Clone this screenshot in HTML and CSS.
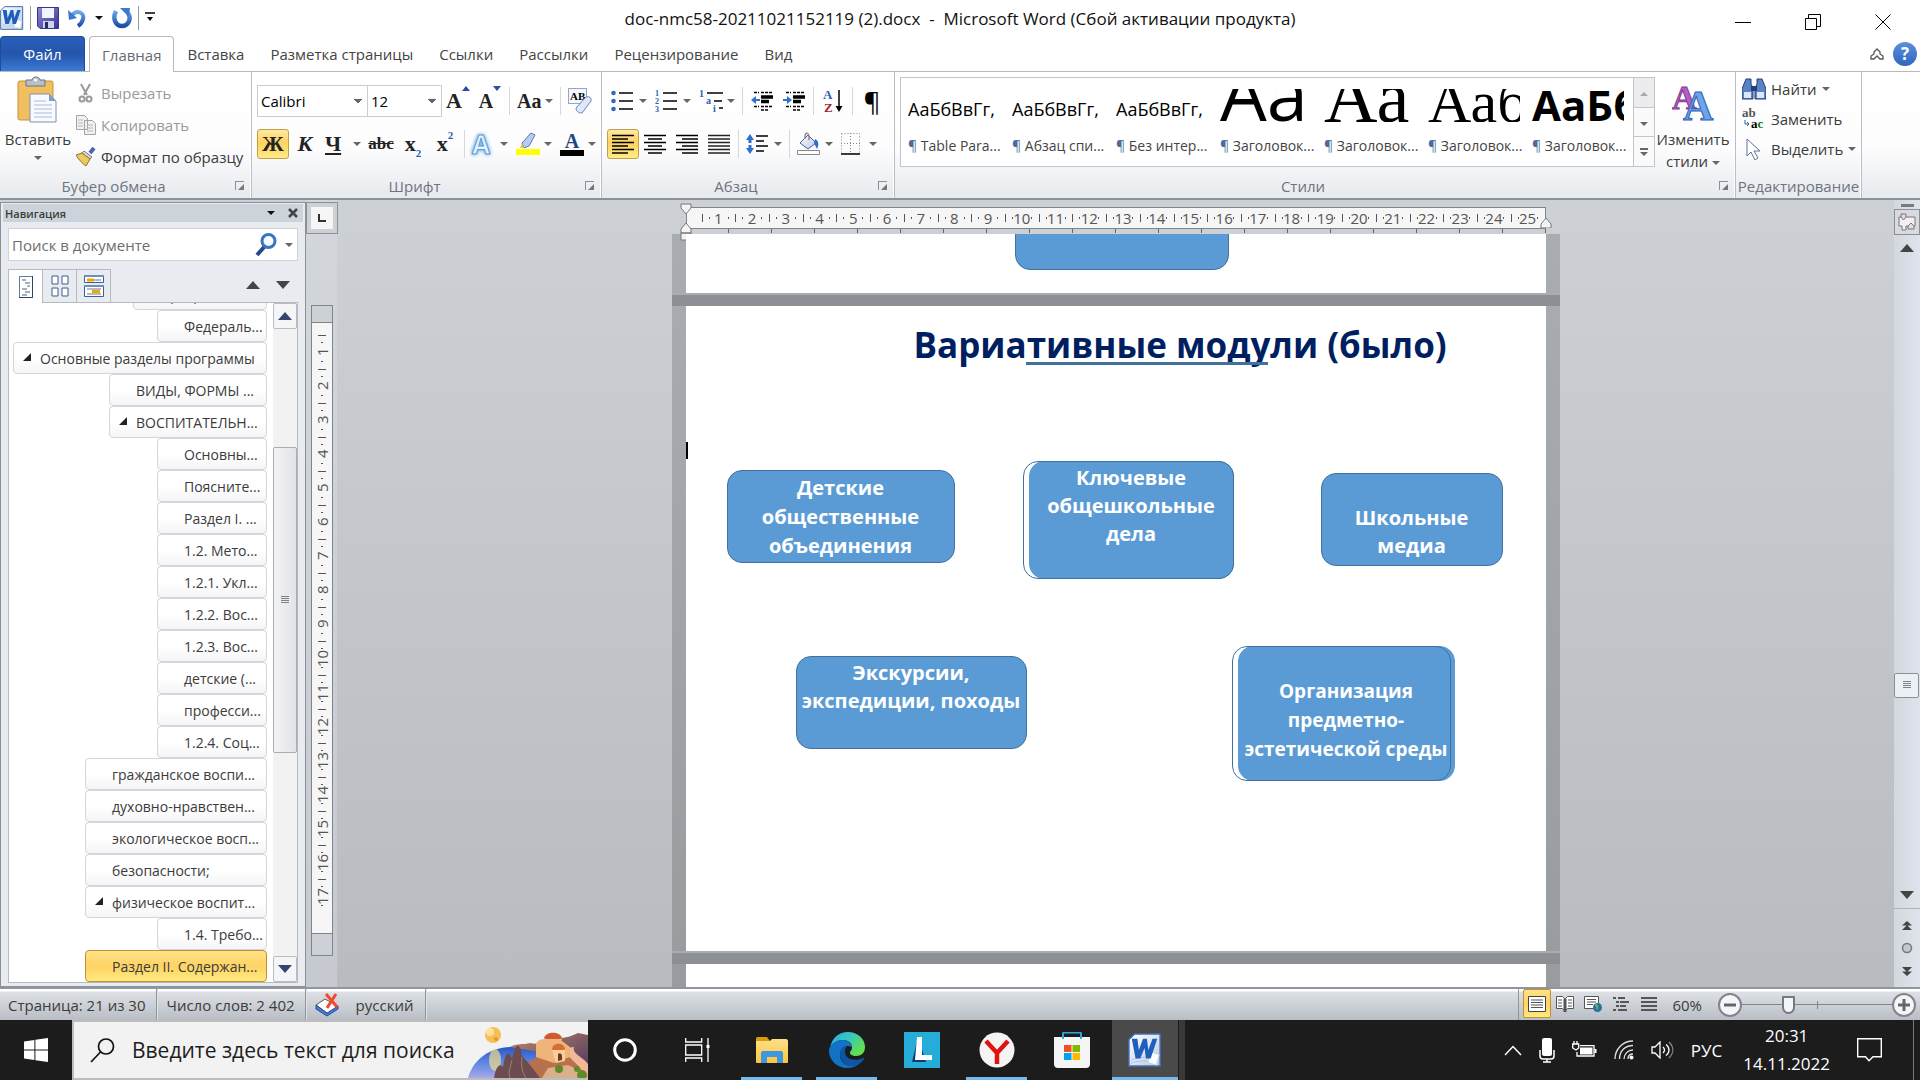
FILE: index.html
```html
<!DOCTYPE html>
<html lang="ru">
<head>
  <meta charset="UTF-8" />
  <meta name="viewport" content="width=device-width, initial-scale=1.0"/>
  <title>doc-nmc58-20211021152119 (2).docx - Microsoft Word</title>
  <link rel="stylesheet" href="styles.css">
</head>
<body>
  <svg class="defs" aria-hidden="true">
    <defs>
      <linearGradient id="blueV" x1="0" y1="0" x2="0" y2="1"><stop offset="0" stop-color="#6fa8ee"/><stop offset="1" stop-color="#1c4fa8"/></linearGradient>
      <linearGradient id="violet" x1="0" y1="0" x2="1" y2="1"><stop offset="0" stop-color="#8f8be0"/><stop offset="1" stop-color="#37328f"/></linearGradient>
      <linearGradient id="silver" x1="0" y1="0" x2="1" y2="1"><stop offset="0" stop-color="#ffffff"/><stop offset="1" stop-color="#b9c9e4"/></linearGradient>
      <linearGradient id="gold" x1="0" y1="0" x2="0" y2="1"><stop offset="0" stop-color="#ffe08a"/><stop offset="1" stop-color="#f7c540"/></linearGradient>
      <symbol id="word" viewBox="0 0 36 36">
        <path d="M7 1h27v34H1V7z" fill="url(#silver)" stroke="#3f6db5" stroke-width="1.5"/>
        <path d="M3 29c8-4 18-4 24-2M3 32c8-3 17-3 22-1" stroke="#a9bfe2" fill="none"/>
        <path d="M24 20l9 3-3 11-9-3z" fill="#fff" stroke="#c9d6ec"/>
        <path d="M4 6h6l1.500 12L16 6h4l1.500 12L26 6h5l-7 21h-5l-1.500-11L13 27H8z" fill="#1e5fbe"/>
      </symbol>
      <symbol id="lines" viewBox="0 0 22 20"><path d="M0 1.500h22M0 5h22M0 8.500h22M0 12h22M0 15.500h22M0 19h22" stroke="currentColor" stroke-width="1.500"/></symbol>
    </defs>
  </svg>

  <header class="titlebar">
    <div class="quick">
      <svg class="icon24"><use href="#word"/></svg>
      <span class="quick-sep"></span>
      <button class="plain" aria-label="Сохранить"><svg width="22" height="22" viewBox="0 0 22 22"><path d="M.5.5h21v21H3l-2.500-2.500z" fill="url(#violet)" stroke="#37328f"/><path d="M5 1h12v10H5z" fill="#f3f4fb"/><path d="M6 14h11v7H6z" fill="#cfd3ea"/><path d="M8 15h3v6H8z" fill="#2b2a60"/></svg></button>
      <button class="plain" aria-label="Отменить"><svg width="18" height="20" viewBox="0 0 18 20"><path d="M4 7C9 1 17 5 15 11c-.6 3-2 5-5 7" fill="none" stroke="url(#blueV)" stroke-width="4"/><path d="M0 2l1 10 8-2z" fill="#3d78cf"/></svg></button>
      <i class="caret dark"></i>
      <button class="plain" aria-label="Повторить"><svg width="20" height="22" viewBox="0 0 20 22"><path d="M4 4c-4 8 0 15 6 15s10-7 6-13" fill="none" stroke="url(#blueV)" stroke-width="4.500"/><path d="M8 1h10l-1 9z" fill="#3d78cf"/></svg></button>
      <span class="quick-sep"></span>
      <button class="plain" aria-label="Настройка панели"><svg width="10" height="12" viewBox="0 0 10 12"><path d="M0 1h10" stroke="#000" stroke-width="1.500"/><path d="M2 5h6l-3 4z"/></svg></button>
    </div>
    <h1 class="window-title">doc-nmc58-20211021152119 (2).docx&nbsp; -&nbsp; Microsoft Word (Сбой активации продукта)</h1>
    <div class="window-buttons">
      <button class="plain" aria-label="Свернуть"><svg width="16" height="16" viewBox="0 0 16 16"><path d="M0 8.500h16" stroke="#000"/></svg></button>
      <button class="plain" aria-label="Развернуть"><svg width="16" height="16" viewBox="0 0 16 16"><path d="M.5 4.500h11v11H.5zM3.500 4V.5h12v12H12" fill="none" stroke="#000"/></svg></button>
      <button class="plain" aria-label="Закрыть"><svg width="16" height="16" viewBox="0 0 16 16"><path d="M.5.5l15 15M15.500.5l-15 15" stroke="#000"/></svg></button>
    </div>
  </header>

  <nav class="tabs">
    <button class="tab file">Файл</button>
    <button class="tab active">Главная</button>
    <button class="tab">Вставка</button>
    <button class="tab">Разметка страницы</button>
    <button class="tab">Ссылки</button>
    <button class="tab">Рассылки</button>
    <button class="tab">Рецензирование</button>
    <button class="tab">Вид</button>
    <div class="tabs-end">
      <button class="plain" aria-label="Свернуть ленту"><svg width="14" height="12" viewBox="0 0 14 12"><path d="M7 1L4 4v2L1 8v3h3l3-3 3 3h3V8l-3-2V4z" fill="#fff" stroke="#555" stroke-width="1.300"/></svg></button>
      <button class="help" aria-label="Справка">?</button>
    </div>
  </nav>

  <section class="ribbon">
    <div class="group clipboard">
      <div class="group-body">
        <button class="big-button">
          <svg width="42" height="48" viewBox="0 0 42 48"><rect x="1" y="5" width="35" height="39" rx="2" fill="#f0c060" stroke="#c89338"/><path d="M9 4h6c0-4 8-4 8 0h5v6H9z" fill="#b8bfc9" stroke="#6c7482"/><circle cx="18.500" cy="4" r="1.500" fill="#fff"/><path d="M13 18h19l7 7v21H13z" fill="#f7faff" stroke="#7d90b0"/><path d="M32 18v7h7z" fill="#7f9fce"/><path d="M17 25h12M17 29h18M17 33h18M17 37h18M17 41h18" stroke="#a9bad6"/></svg>
          <span>Вставить</span><i class="caret"></i>
        </button>
        <div class="stack">
          <button class="small-button disabled"><svg width="20" height="20" viewBox="0 0 20 20"><path d="M5 1l6 11M14 1L8 12" stroke="#999" stroke-width="2"/><circle cx="6" cy="16" r="2.500" fill="none" stroke="#999" stroke-width="2"/><circle cx="13" cy="16" r="2.500" fill="none" stroke="#999" stroke-width="2"/></svg>Вырезать</button>
          <button class="small-button disabled"><svg width="20" height="20" viewBox="0 0 20 20"><path d="M.5.5h8l3 3v11H.5zM8.500 5.500h8l3 3v11h-11z" fill="#f1f1f1" stroke="#a3a3a3"/><path d="M2 5h5M2 8h5M2 11h5M11 10h6M11 13h6M11 16h6" stroke="#b5b5b5"/></svg>Копировать</button>
          <button class="small-button"><svg width="20" height="20" viewBox="0 0 20 20"><path d="M14 6l4-5" stroke="#4866b5" stroke-width="4"/><path d="M8 4l8 6-2 2-8-6z" fill="#d9dbe2" stroke="#777"/><path d="M6 6l8 6-4 7C6 16 2 12 0 8z" fill="#e9cb62" stroke="#8d7427"/></svg>Формат по образцу</button>
        </div>
      </div>
      <div class="group-label">Буфер обмена<button class="launcher" aria-label="Буфер обмена"></button></div>
    </div>

    <div class="group font">
      <div class="rows">
        <div class="row">
          <select class="combo wide" aria-label="Шрифт"><option>Calibri</option></select><select class="combo" aria-label="Размер"><option>12</option></select>
          <button class="tool serif">А<i class="tri-up"></i></button>
          <button class="tool serif small">А<i class="tri-down"></i></button>
          <span class="sep"></span>
          <button class="tool split serif small">Aa<i class="caret"></i></button>
          <span class="sep"></span>
          <button class="tool" aria-label="Очистить формат"><svg width="24" height="26" viewBox="0 0 24 26"><rect x=".5" y=".5" width="18" height="15" fill="#f4f7fd" stroke="#93a5c9"/><text x="2" y="12" font-family="Liberation Serif" font-weight="700" font-size="11">АВ</text><path d="M8 20L18 9c3-1 6 1 5 4L14 25c-4 0-6-2-6-5z" fill="#dfe8fa" stroke="#6b84bd"/></svg></button>
        </div>
        <div class="row">
          <button class="tool on serif">Ж</button>
          <button class="tool serif italic">К</button>
          <button class="tool split serif"><u>Ч</u><i class="caret"></i></button>
          <button class="tool serif strike"><s>abc</s></button>
          <button class="tool serif">x<sub>2</sub></button>
          <button class="tool serif">x<sup>2</sup></button>
          <span class="sep"></span>
          <button class="tool split glow">A<i class="caret"></i></button>
          <button class="tool split" aria-label="Цвет выделения"><svg width="24" height="24" viewBox="0 0 24 24"><path d="M6 11L15 1l4 2-6 11-5 2z" fill="#b9cdf0" stroke="#5a74a8"/><path d="M6 11l-2 5 4 0z" fill="#e6c84f"/><path d="M0 17h24v6H0z" fill="#ff0"/></svg><i class="caret"></i></button>
          <button class="tool split ink"><span class="ink-a">А</span><i class="caret"></i></button>
        </div>
      </div>
      <div class="group-label">Шрифт<button class="launcher" aria-label="Шрифт"></button></div>
    </div>

    <div class="group paragraph">
      <div class="rows">
        <div class="row">
          <button class="tool split" aria-label="Маркеры"><svg width="22" height="22" viewBox="0 0 22 22"><path d="M8 3h14M8 11h14M8 19h14" stroke="#000" stroke-width="1.500"/><g fill="#3568bd"><circle cx="2.500" cy="3" r="2.300"/><circle cx="2.500" cy="11" r="2.300"/><circle cx="2.500" cy="19" r="2.300"/></g></svg><i class="caret"></i></button>
          <button class="tool split" aria-label="Нумерация"><svg width="22" height="22" viewBox="0 0 22 22"><path d="M8 3h14M8 11h14M8 19h14" stroke="#000" stroke-width="1.500"/><g fill="#2d5fb4" font-family="Liberation Serif" font-weight="700" font-size="8"><text x="0" y="6">1</text><text x="0" y="14">2</text><text x="0" y="22">3</text></g></svg><i class="caret"></i></button>
          <button class="tool split" aria-label="Многоуровневый список"><svg width="24" height="24" viewBox="0 0 24 24"><path d="M8 4h16M15 12h8M20 19h4" stroke="#000" stroke-width="1.500"/><g fill="#2d5fb4" font-family="Liberation Serif" font-weight="700" font-size="10"><text x="0" y="8">1</text><text x="7" y="15">a</text><text x="14" y="23">i</text></g></svg><i class="caret"></i></button>
          <span class="sep"></span>
          <button class="tool" aria-label="Уменьшить отступ"><svg width="22" height="20" viewBox="0 0 22 20"><path d="M3 1.500h5M10 1.500h12M3 15.500h5M10 15.500h12M10 19h8" stroke="#000" stroke-width="1.500" stroke-dasharray="3 1"/><path d="M10 6h12M10 10.500h8" stroke="#000" stroke-width="3.500"/><path d="M0 9l5-4v3h4v2H5v3z" fill="#2f6fd0"/></svg></button>
          <button class="tool" aria-label="Увеличить отступ"><svg width="22" height="20" viewBox="0 0 22 20"><path d="M3 1.500h5M10 1.500h12M3 15.500h5M10 15.500h12M10 19h8" stroke="#000" stroke-width="1.500" stroke-dasharray="3 1"/><path d="M10 6h12M10 10.500h8" stroke="#000" stroke-width="3.500"/><path d="M9 9L4 5v3H0v2h4v3z" fill="#2f6fd0"/></svg></button>
          <span class="sep"></span>
          <button class="tool" aria-label="Сортировка"><svg width="20" height="24" viewBox="0 0 20 24"><g font-family="Liberation Serif" font-weight="700" font-size="13"><text x="0" y="10" fill="#2d5fb4">A</text><text x="1" y="23" fill="#a3262c">Z</text></g><path d="M16 1v18" stroke="#000" stroke-width="1.500"/><path d="M12.500 17h7L16 23z"/></svg></button>
          <span class="sep"></span>
          <button class="tool pilcrow">¶</button>
        </div>
        <div class="row">
          <button class="tool on" aria-label="По левому краю"><svg width="22" height="20" viewBox="0 0 22 20"><path d="M0 1.500h22M0 5h16M0 8.500h22M0 12h16M0 15.500h22M0 19h16" stroke="#000" stroke-width="1.500"/></svg></button>
          <button class="tool" aria-label="По центру"><svg width="22" height="20" viewBox="0 0 22 20"><path d="M0 1.500h22M4 5h14M0 8.500h22M4 12h14M0 15.500h22M4 19h14" stroke="#000" stroke-width="1.500"/></svg></button>
          <button class="tool" aria-label="По правому краю"><svg width="22" height="20" viewBox="0 0 22 20"><path d="M0 1.500h22M6 5h16M0 8.500h22M6 12h16M0 15.500h22M6 19h16" stroke="#000" stroke-width="1.500"/></svg></button>
          <button class="tool" aria-label="По ширине"><svg width="22" height="20"><use href="#lines"/></svg></button>
          <span class="sep"></span>
          <button class="tool split" aria-label="Интервал"><svg width="22" height="20" viewBox="0 0 22 20"><path d="M10 2h12M10 7h8M10 12h12M10 17h8" stroke="#000" stroke-width="1.500"/><path d="M4 0l4 6H5.500v3h-3V6H0zM4 20l4-6H5.500v-3h-3v3H0z" fill="#2f6fd0"/></svg><i class="caret"></i></button>
          <span class="sep"></span>
          <button class="tool split" aria-label="Заливка"><svg width="24" height="24" viewBox="0 0 24 24"><path d="M3 11l8-8 8 8-8 6z" fill="url(#silver)" stroke="#44619c"/><path d="M8 7c-1-8 5-8 4 1" fill="none" stroke="#888" stroke-width="1.500"/><path d="M18 7c4 2 4 6 2 10l-3-6z" fill="#2f6fd0"/><path d="M.5 18.500h22v4H.5z" fill="#fff" stroke="#888"/></svg><i class="caret"></i></button>
          <button class="tool split" aria-label="Границы"><svg width="20" height="22" viewBox="0 0 20 22"><path d="M.5.5h18v20H.5zM9.500 0v20M0 10.500h19" fill="none" stroke="#888" stroke-dasharray="1 2"/><path d="M0 21h19" stroke="#000" stroke-width="1.500"/></svg><i class="caret"></i></button>
        </div>
      </div>
      <div class="group-label">Абзац<button class="launcher" aria-label="Абзац"></button></div>
    </div>

    <div class="group styles">
      <div class="group-body">
        <div class="gallery">
          <button class="style"><span class="preview">АаБбВвГг,</span><span class="style-name"><b>¶</b> Table Para...</span></button>
          <button class="style"><span class="preview">АаБбВвГг,</span><span class="style-name"><b>¶</b> Абзац спи...</span></button>
          <button class="style"><span class="preview">АаБбВвГг,</span><span class="style-name"><b>¶</b> Без интер...</span></button>
          <button class="style"><span class="preview"><span class="huge">Аа</span></span><span class="style-name"><b>¶</b> Заголовок...</span></button>
          <button class="style"><span class="preview"><span class="huge times">Аа</span></span><span class="style-name"><b>¶</b> Заголовок...</span></button>
          <button class="style"><span class="preview"><span class="large times">Ааб</span></span><span class="style-name"><b>¶</b> Заголовок...</span></button>
          <button class="style"><span class="preview"><span class="heavy">АаБб</span></span><span class="style-name"><b>¶</b> Заголовок...</span></button>
          <div class="gallery-scroll">
            <button class="disabled" aria-label="Вверх"><i class="caret up"></i></button>
            <button aria-label="Вниз"><i class="caret"></i></button>
            <button aria-label="Все стили"><i class="caret more"></i></button>
          </div>
        </div>
        <button class="big-button change">
          <svg width="42" height="42" viewBox="0 0 42 42"><g font-family="Liberation Serif" font-weight="700"><text x="0" y="28" font-size="34" fill="#b65cc4" stroke="#853896">A</text><text x="11" y="39" font-size="42" fill="#6fa3ea" stroke="#2d61b5">A</text></g></svg>
          <span>Изменить</span><span>стили <i class="caret"></i></span>
        </button>
      </div>
      <div class="group-label">Стили<button class="launcher" aria-label="Стили"></button></div>
    </div>

    <div class="group editing">
      <div class="group-body">
        <div class="stack">
          <button class="small-button"><svg width="24" height="22" viewBox="0 0 24 22"><path d="M4 1h5v5l2 4v11H0V11zM20 1h-5v5l-2 4v11h11V11z" fill="#5c82c4" stroke="#1f3f7d"/><path d="M9 8h6v5H9z" fill="#1f3f7d"/><path d="M2 14h7v6H2zM15 14h7v6h-7z" fill="#dce7fa"/></svg>Найти <i class="caret"></i></button>
          <button class="small-button"><svg width="24" height="22" viewBox="0 0 24 22"><g font-family="Liberation Serif" font-weight="700" font-size="13"><text x="0" y="9" fill="#555">ab</text><text x="9" y="20">a<tspan fill="#0a7a0a">c</tspan></text></g><path d="M3 12v4h4M5 14l2 2-2 2" fill="none" stroke="#2d5fb4"/></svg>Заменить</button>
          <button class="small-button"><svg width="24" height="22" viewBox="0 0 24 22"><path d="M5 1v17l4-4 4 8 3-2-4-7h6z" fill="#fff" stroke="#5c7399"/></svg>Выделить <i class="caret"></i></button>
        </div>
      </div>
      <div class="group-label">Редактирование</div>
    </div>
  </section>

  <main class="workspace">
    <aside class="navpane">
      <div class="nav-title">Навигация<i class="caret dark"></i><button class="plain" aria-label="Закрыть панель"><svg width="10" height="10" viewBox="0 0 10 10"><path d="M1 1l8 8M9 1L1 9" stroke="#444" stroke-width="2.500"/></svg></button></div>
      <div class="nav-search">
        <input type="text" placeholder="Поиск в документе" aria-label="Поиск в документе">
        <svg width="22" height="24" viewBox="0 0 22 24"><path d="M2 22l8-9" stroke="#27488c" stroke-width="4"/><circle cx="13.500" cy="8" r="6.500" fill="#f4fbff" stroke="#3a74bf" stroke-width="3"/></svg>
        <i class="caret"></i>
      </div>
      <div class="nav-tabs">
        <button class="on" aria-label="Заголовки"><svg width="14" height="22" viewBox="0 0 14 22"><path d="M.5.5h13v21H.5z" fill="#fff" stroke="#5c7aa8"/><path d="M13.500 0v21.500H0" fill="none" stroke="#2c4466"/><path d="M3 4h4M6 7h5M8 10h3M3 13h5M6 16h5M3 19h5" stroke="#8b96a5" stroke-width="1.500"/></svg></button>
        <button aria-label="Страницы"><svg width="18" height="22" viewBox="0 0 18 22"><path d="M1 1h6v8H1zM11 1h6v8h-6zM1 13h6v8H1zM11 13h6v8h-6z" fill="#fff" stroke="#3f5d8f"/></svg></button>
        <button aria-label="Результаты"><svg width="20" height="22" viewBox="0 0 20 22"><path d="M.5.5h19v7H.5zM.5 10.500h19v11H.5z" fill="#fff" stroke="#3f5d8f"/><path d="M0 1h20M0 11h20" stroke="#6f8fc4" stroke-width="2"/><path d="M3 5h14M3 14h14M3 19h14" stroke="#98a4b8" stroke-width="1.500"/><path d="M3 5h7M8 16.500h8" stroke="#f0a800" stroke-width="3"/></svg></button>
        <span class="nav-arrows"><i class="arrow up"></i><i class="arrow"></i></span>
      </div>
      <div class="nav-body">
        <div class="nav-list">
          <a href="#" class="partial">Программа</a>
          <a href="#" class="lv5">Федераль...</a>
          <a href="#" class="lv1 open">Основные разделы программы</a>
          <a href="#" class="lv3">ВИДЫ, ФОРМЫ ...</a>
          <a href="#" class="lv3 open">ВОСПИТАТЕЛЬН...</a>
          <a href="#" class="lv5">Основны...</a>
          <a href="#" class="lv5">Поясните...</a>
          <a href="#" class="lv5">Раздел I. ...</a>
          <a href="#" class="lv5">1.2. Мето...</a>
          <a href="#" class="lv5">1.2.1. Укл...</a>
          <a href="#" class="lv5">1.2.2. Вос...</a>
          <a href="#" class="lv5">1.2.3. Вос...</a>
          <a href="#" class="lv5">детские (...</a>
          <a href="#" class="lv5">професси...</a>
          <a href="#" class="lv5">1.2.4. Соц...</a>
          <a href="#" class="lv2">гражданское воспи...</a>
          <a href="#" class="lv2">духовно-нравствен...</a>
          <a href="#" class="lv2">экологическое восп...</a>
          <a href="#" class="lv2">безопасности;</a>
          <a href="#" class="lv2 open">физическое воспит...</a>
          <a href="#" class="lv5">1.4. Требо...</a>
          <a href="#" class="lv2 current">Раздел II. Содержан...</a>
        </div>
        <div class="nav-scroll">
          <button aria-label="Вверх"><i class="arrow up navy"></i></button>
          <div class="nav-track"><span class="nav-thumb"><i class="grip"></i></span></div>
          <button aria-label="Вниз"><i class="arrow navy"></i></button>
        </div>
      </div>
    </aside>

    <div class="vruler-col">
      <button class="tab-stop" aria-label="Табуляция"><svg width="8" height="8" viewBox="0 0 8 8"><path d="M1 0v7h7" fill="none" stroke="#333" stroke-width="2"/></svg></button>
      <div class="vruler"><div class="vruler-white" id="vruler"></div></div>
    </div>

    <div class="doc-col">
      <div class="hruler-wrap">
        <div class="hruler" id="hruler"></div>
        <div class="tab-ticks"></div>
        <svg class="indent left" width="12" height="38" viewBox="0 0 12 38"><path d="M1 1h10v4L6 11 1 5zM6 20l5 6v4H1v-4zM1 30h10v7H1z" fill="#f4f4f4" stroke="#777"/></svg>
        <svg class="indent right" width="12" height="10" viewBox="0 0 12 10"><path d="M6 0l5 6v4H1V6z" fill="#f4f4f4" stroke="#777"/></svg>
      </div>
      <div class="pages">
        <div class="page prev"><div class="shape s-top"></div></div>
        <div class="page-gap"></div>
        <div class="page main">
          <h2 class="doc-title">Вариативные модули (было)</h2>
          <span class="title-line"></span>
          <span class="text-cursor"></span>
          <div class="shape s-children">Детские<br>общественные<br>объединения</div>
          <div class="shape s-key offset">Ключевые<br>общешкольные<br>дела</div>
          <div class="shape s-media">Школьные<br>медиа</div>
          <div class="shape s-tours">Экскурсии,<br>экспедиции, походы</div>
          <div class="shape s-env offset">Организация<br>предметно-<br>эстетической среды</div>
        </div>
        <div class="page-gap"></div>
        <div class="page next"></div>
      </div>
    </div>

    <div class="vscroll">
      <span class="split-bar"></span>
      <button class="ruler-toggle" aria-label="Линейка"><svg width="18" height="18" viewBox="0 0 18 18"><path d="M1 4h16v9H8v4H4v-4H1z" fill="#f4eef2" stroke="#777"/><path d="M3 1h5v3L5.500 7 3 4zM10 13l3-3 3 3v3h-6z" fill="#ddd" stroke="#777"/></svg></button>
      <button class="plain arrow-btn" aria-label="Вверх"><i class="arrow up"></i></button>
      <div class="vtrack"><span class="vthumb"><i class="grip"></i></span></div>
      <button class="plain arrow-btn" aria-label="Вниз"><i class="arrow"></i></button>
      <div class="browse">
        <button class="plain" aria-label="Назад"><svg width="10" height="10" viewBox="0 0 10 10"><path d="M5 0l5 4.500H0zM5 4l5 5H0z" fill="#444"/></svg></button>
        <button class="plain" aria-label="Выбор объекта"><svg width="12" height="12" viewBox="0 0 12 12"><circle cx="6" cy="6" r="4.500" fill="#c4c8ce" stroke="#777" stroke-width="1.500"/></svg></button>
        <button class="plain" aria-label="Вперед"><svg width="10" height="10" viewBox="0 0 10 10"><path d="M5 10L0 5.500h10zM5 6L0 1h10z" fill="#444"/></svg></button>
      </div>
    </div>
  </main>

  <footer class="status">
    <span class="cell">Страница: 21 из 30</span>
    <span class="cell">Число слов: 2 402</span>
    <span class="cell lang"><svg width="24" height="24" viewBox="0 0 24 24"><path d="M1 12l9-6 13 7-10 8z" fill="#fff" stroke="#555"/><path d="M1 12v4l11 7 11-7v-3l-11 7z" fill="#4a78cc" stroke="#2c4f97"/><path d="M11 1l11 13M21 1L12 15" stroke="#f04a30" stroke-width="3"/></svg>русский</span>
    <span class="status-space"></span>
    <div class="views">
      <button class="on" aria-label="Разметка страницы"><svg width="18" height="16" viewBox="0 0 18 16"><path d="M.5.5h17v15H.5z" fill="#fff" stroke="#444"/><path d="M3 4h12M3 6.500h12M3 9h12M3 11.500h12" stroke="#555"/></svg></button>
      <button aria-label="Режим чтения"><svg width="18" height="16" viewBox="0 0 18 16"><path d="M.5.5h6L9 3l2.500-2.500h6v12h-6L9 15l-2.500-2.500h-6z" fill="#fff" stroke="#555"/><path d="M2 4h4M2 7h4M2 10h4M12 4h4M12 7h4M12 10h4" stroke="#555"/><path d="M9 3v13" stroke="#555" stroke-width="3"/></svg></button>
      <button aria-label="Веб-документ"><svg width="18" height="16" viewBox="0 0 18 16"><path d="M.5.5h14v12H.5z" fill="#fff" stroke="#555"/><path d="M3 3.500h9M3 6h9M3 8.500h6" stroke="#555"/><circle cx="13.500" cy="11.500" r="4.500" fill="#2d6f9e"/><path d="M11 9c2 0 3 1 2 4" stroke="#5fb64e" stroke-width="2" fill="none"/></svg></button>
      <button aria-label="Структура"><svg width="16" height="14" viewBox="0 0 16 14"><path d="M0 1h3M5 1h7M3 5h3M7 5h9M3 9h3M7 9h6M0 13h3M5 13h9" stroke="#555" stroke-width="2"/></svg></button>
      <button aria-label="Черновик"><svg width="16" height="14" viewBox="0 0 16 14"><path d="M0 1h16M0 5h16M0 9h16M0 13h16" stroke="#555" stroke-width="2"/></svg></button>
    </div>
    <button class="zoom-value">60%</button>
    <button class="zoom-btn" aria-label="Уменьшить"><svg width="12" height="12" viewBox="0 0 12 12"><path d="M0 6h12" stroke="#666" stroke-width="3"/></svg></button>
    <input class="zoom-range" type="range" min="0" max="100" value="29" aria-label="Масштаб">
    <button class="zoom-btn" aria-label="Увеличить"><svg width="12" height="12" viewBox="0 0 12 12"><path d="M0 6h12M6 0v12" stroke="#666" stroke-width="3"/></svg></button>
  </footer>

  <div class="taskbar">
    <button class="start" aria-label="Пуск"><svg width="24" height="24" viewBox="0 0 24 24"><path d="M0 3.400L10.400 2v9.400H0zM11.400 1.800L24 0v11.400H11.400zM0 12.400h10.400V22L0 20.600zM11.400 12.400H24V24l-12.600-1.800z" fill="#fff"/></svg></button>
    <div class="task-search">
      <svg width="25" height="25" viewBox="0 0 25 25"><circle cx="16" cy="8.500" r="7.500" fill="none" stroke="#111" stroke-width="1.700"/><path d="M10.500 14L1 24" stroke="#111" stroke-width="1.700"/></svg>
      <input type="text" placeholder="Введите здесь текст для поиска" aria-label="Поиск">
      <svg class="art" width="120" height="56" viewBox="0 0 120 56">
        <defs>
          <linearGradient id="sea" x1="0" y1="0" x2="0" y2="1"><stop offset="0" stop-color="#2857c8"/><stop offset=".5" stop-color="#5d86e0"/><stop offset="1" stop-color="#a7a9ea"/></linearGradient>
          <linearGradient id="hill" x1="0" y1="0" x2="1" y2="1"><stop offset="0" stop-color="#c08a64"/><stop offset="1" stop-color="#443060"/></linearGradient>
        </defs>
        <path d="M0 56C6 36 22 26 42 25c30-2 54 10 78 31z" fill="url(#sea)"/>
        <ellipse cx="27" cy="38" rx="6" ry="11" fill="#f1dd8c" opacity=".7"/>
        <path d="M42 25c6-4 14-2 20-4 10 2 18-1 28-5 8 0 14-2 20-5l10 2v43H92L66 29z" fill="url(#hill)"/>
        <path d="M58 42l16-10 28-6c4 8 12 14 18 22v8H66z" fill="#b9704c"/>
        <path d="M98 26c-2 8 12 14 20 28l2-1V42c-6-8-16-10-14-17z" fill="#f3b79a"/>
        <path d="M26 56c2-12 6-15 9-11 2-14 6-18 9-8 4-18 8-16 10-3 4 4 10 11 18 22z" fill="#6d4c50"/>
        <path d="M44 38c-2 8-4 13-2 18M54 35c-1 9 0 15 4 21" stroke="#a37d74" fill="none"/>
        <path d="M68 23c0-6 10-7 12-4l14 0 8 6v10l-16 6-18-6z" fill="#eeb47a"/>
        <path d="M76 18c1-8 16-9 18 0l-2 3H78z" fill="#eeb47a"/>
        <path d="M76 16c2-7 16-7 18 0l-2 1H78z" fill="#cf5b32"/>
        <path d="M84 27c1-7 12-7 13 0l-1 1H85z" fill="#d86a3b"/>
        <path d="M84 28h13v11l-9 2z" fill="#f8cf97"/>
        <path d="M90 32c2-2 4 0 4 2v4l-4 1z" fill="#6f3a2a"/>
        <path d="M80 46l20-3 20 9v4H74z" fill="#d9b08a"/>
        <g fill="#5e8a2a"><circle cx="91" cy="47" r="4"/><circle cx="109" cy="47" r="3"/><circle cx="114" cy="53" r="5"/></g>
        <circle cx="25" cy="13" r="8" fill="#f6bf55"/><circle cx="22" cy="10" r="4" fill="#fde29a"/><circle cx="28" cy="17" r="2" fill="#e29a35"/>
      </svg>
    </div>
    <button class="task narrow" aria-label="Кортана"><svg width="24" height="24" viewBox="0 0 24 24"><circle cx="12" cy="12" r="10.300" fill="none" stroke="#fff" stroke-width="3"/></svg></button>
    <button class="task narrow" aria-label="Представление задач"><svg width="25" height="24" viewBox="0 0 25 24"><path d="M.7 0v4h16V0M.7 24v-4h16v4M.7 7h16v10H.7zM23 0v24" fill="none" stroke="#fff" stroke-width="1.300"/><path d="M21.500 7h3v3h-3z" fill="#fff"/></svg></button>
    <button class="task running" aria-label="Проводник"><svg width="32" height="26" viewBox="0 0 32 26"><path d="M0 2c0-1 0-2 2-2h9l3 4H0z" fill="#dc9a0c"/><path d="M0 4h14l2-2h14c1 0 2 1 2 2v21c0 1-1 1-2 1H1c-1 0-1-1-1-1z" fill="url(#gold)"/><path d="M5 26V16c0-1 1-2 2-2h18c1 0 2 1 2 2v10h-6v-6H11v6z" fill="#3d97e0"/></svg></button>
    <button class="task running" aria-label="Edge"><svg width="36" height="36" viewBox="0 0 36 36"><defs><linearGradient id="e1" x1="0" y1="0" x2="1" y2=".6"><stop offset="0" stop-color="#2aa9e6"/><stop offset=".5" stop-color="#35c6c0"/><stop offset="1" stop-color="#66e04a"/></linearGradient></defs><path d="M1 17C2 7 9 0 19 0c10 0 17 7 17 15 0 6-4 9-9 9-4 0-6-2-6-3 0-2 2-2 2-6 0-4-4-7-9-7C7 8 2 12 1 17z" fill="url(#e1)"/><path d="M14 8C6 8 0 13 0 19c0 9 8 17 18 17 4 0 8-1 11-3-12 3-18-3-18-10 0-5 3-8 6-9 3-.5 6 1 6 1-1-4-4-7-9-7z" fill="#1272c6"/><path d="M11 22c0 7 6 14 15 12 4-1 7-4 9-7 .5-1-.5-1.300-1-1-8 4-19 1-18-7 0-2 1-4 2-5-4 0-7 4-7 8z" fill="#0d55a5"/></svg></button>
    <button class="task" aria-label="L"><svg width="36" height="36" viewBox="0 0 36 36"><path d="M0 0h36v36H0z" fill="#25acd8"/><path d="M14 5l-6 25h14z" fill="#0b3d6e"/><path d="M13 5h5v18h10v5H11z" fill="#fff"/></svg></button>
    <button class="task running" aria-label="Яндекс"><svg width="36" height="36" viewBox="0 0 36 36"><circle cx="18" cy="18" r="17.500" fill="#f4f4f4"/><path d="M7 9l11 12L29 9M18 19v13" fill="none" stroke="#e01212" stroke-width="4.500"/></svg></button>
    <button class="task" aria-label="Store"><svg width="36" height="36" viewBox="0 0 36 36"><path d="M9 8V2c0-1 .5-1.500 1.500-1.500h15c1 0 1.500.5 1.500 1.500v6" fill="none" stroke="#2aa9e6" stroke-width="2"/><path d="M0 5h36v27c0 2-1 4-4 4H4c-3 0-4-2-4-4z" fill="#f5f5f5"/><path d="M8 5h2v2H8zM26 5h2v2h-2z" fill="#2aa9e6"/><path d="M10 13h7.500v7H10z" fill="#f04e23"/><path d="M18.500 13H26v7h-7.500z" fill="#7fb900"/><path d="M10 21h7.500v7H10z" fill="#00a3ee"/><path d="M18.500 21H26v7h-7.500z" fill="#ffb800"/></svg></button>
    <button class="task running current" aria-label="Word"><svg width="34" height="34"><use href="#word"/></svg></button>
    <div class="tray">
      <svg width="18" height="11" viewBox="0 0 18 11"><path d="M1 10l8-8.500 8 8.500" fill="none" stroke="#fff" stroke-width="1.500"/></svg>
      <svg width="16" height="25" viewBox="0 0 16 25"><rect x="3" y="0" width="10" height="18" rx="2" fill="#fff"/><path d="M1 12v6c0 2 1 3 3 3h8c2 0 3-1 3-3v-6M8 21v3M4 24h8" fill="none" stroke="#fff" stroke-width="1.500"/></svg>
      <svg width="25" height="18" viewBox="0 0 25 18"><path d="M8 4.700h14V15H5v-4" fill="none" stroke="#fff" stroke-width="1.300"/><path d="M8 6.500h12.500v7H8z" fill="#fff"/><path d="M22.500 8h2v4h-2z" fill="#fff"/><path d="M2 0v3M5 0v3M.7 3h6v4L4 9 .7 7z" fill="none" stroke="#fff" stroke-width="1.300"/></svg>
      <svg width="20" height="20" viewBox="0 0 20 20"><path d="M1 19C1 9 9 1 19 1M5.500 19C5.500 11 11 5.500 19 5.500M10 19c0-5 4-9 9-9M14 19c0-3 2-5 5-5" fill="none" stroke="#ddd" stroke-width="1.400"/><circle cx="17.500" cy="17.500" r="2" fill="#fff"/></svg>
      <svg width="23" height="18" viewBox="0 0 23 18"><path d="M1 6h3l5-5v16l-5-5H1z" fill="none" stroke="#fff" stroke-width="1.300"/><path d="M12 6c2 2 2 4 0 6M15 3.500c4 3 4 8 0 11" fill="none" stroke="#fff" stroke-width="1.300"/><path d="M18 1c5 5 5 11 0 16" fill="none" stroke="#888" stroke-width="1.300"/></svg>
      <span class="lang-code">РУС</span>
      <time class="clock">20:31<br>14.11.2022</time>
      <svg width="25" height="24" viewBox="0 0 25 24"><path d="M.7.7h23.600v18H16L12 22.700 8.500 18.700H.7z" fill="none" stroke="#fff" stroke-width="1.400"/></svg>
      <span class="show-desktop"></span>
    </div>
  </div>

  <script>
    function fillRuler(id, count) {
      const ruler = document.getElementById(id);
      for (let n = 1; n <= count; n++) {
        const mark = document.createElement('span');
        mark.className = 'mark';
        mark.textContent = n;
        ruler.appendChild(mark);
      }
    }

    fillRuler('hruler', 25);
    fillRuler('vruler', 17);
  </script>
</body>
</html>
```
FILE: styles.css
```css
* { margin: 0; padding: 0; box-sizing: border-box; }
html, body { height: 100%; }
body {
  font-family: "Open Sans", "Noto Sans", sans-serif;
  font-size: 15px;
  color: #3b3b3b;
  background: #fff;
  display: flex;
  flex-direction: column;
  overflow: hidden;
}
button, input, select { font: inherit; color: inherit; }
button { background: none; border: none; white-space: nowrap; }
svg { display: block; flex: none; }
.defs { position: absolute; width: 0; height: 0; }
.icon24 { width: 24px; height: 24px; }
.plain { display: flex; align-items: center; justify-content: center; }

/* small triangles */
.caret {
  display: inline-block;
  flex: none;
  width: 0;
  height: 0;
  border: 4px solid transparent;
  border-top: 4px solid #666;
  border-bottom: 0;
  vertical-align: middle;
}
.caret.dark { border-top-color: #111; }
.caret.up { border-top: 0; border-bottom: 4px solid #aaa; }
.caret.more { position: relative; }
.caret.more::before {
  content: "";
  position: absolute;
  left: -4px;
  top: -8px;
  width: 8px;
  height: 2px;
  background: #666;
}
.arrow {
  display: block;
  width: 0;
  height: 0;
  border: 7px solid transparent;
  border-top: 8px solid #444;
  border-bottom: 0;
}
.arrow.up { border-top: 0; border-bottom: 8px solid #444; }
.arrow.navy { border-top-color: #34466f; }
.arrow.up.navy { border-bottom-color: #34466f; }
.grip {
  width: 8px;
  height: 8px;
  background: repeating-linear-gradient(#7d838c 0 1px, transparent 1px 2px);
}

/* title bar */
.titlebar {
  height: 36px;
  flex: none;
  display: grid;
  grid-template-columns: 1fr auto 1fr;
  align-items: center;
}
.quick { display: flex; align-items: center; gap: 9px; height: 30px; }
.quick-sep { width: 1px; height: 24px; background: #999; margin: 0 -3px; }
.window-title { font-size: 17px; font-weight: 400; color: #111; }
.window-buttons { display: flex; justify-content: flex-end; gap: 54px; padding: 7px 29px 0 0; }

/* tabs */
.tabs {
  height: 36px;
  flex: none;
  display: flex;
  border-bottom: 1px solid #b6babf;
}
.tab { padding: 0 13px; color: #444; height: 36px; }
.tab.file {
  width: 85px;
  margin-right: 4px;
  color: #fff;
  background: linear-gradient(#2a5fb8, #2455ab 50%, #3d7bd6);
  border: 1px solid #1e4c9c;
  border-bottom: none;
  border-radius: 4px 4px 0 0;
  height: 35px;
}
.tab.active {
  padding: 0 12px;
  color: #666c75;
  background: #fff;
  border: 1px solid #b6babf;
  border-bottom: none;
  border-radius: 4px 4px 0 0;
}
.tabs-end { margin-left: auto; display: flex; align-items: center; gap: 9px; padding-right: 3px; }
.help {
  width: 24px;
  height: 24px;
  border-radius: 50%;
  background: linear-gradient(#5c8fdc, #2f66bd);
  color: #fff;
  font-size: 17px;
  font-weight: 700;
  line-height: 24px;
}

/* ribbon */
.ribbon {
  height: 128px;
  flex: none;
  display: flex;
  background: linear-gradient(#fff 0, #fdfdfe 60%, #e7eaee 98%);
  border-bottom: 2px solid #8b9097;
}
.group {
  display: flex;
  flex-direction: column;
  border-right: 1px solid #b9bec5;
  box-shadow: inset -1px 0 #fff;
}
.clipboard { width: 252px; }
.font { width: 350px; }
.paragraph { width: 293px; }
.styles { flex: 1; }
.editing { width: 126px; margin-right: 58px; }
.group-body { flex: 1; display: flex; padding-top: 4px; }
.group-label {
  height: 24px;
  line-height: 24px;
  padding-right: 24px;
  text-align: center;
  color: #6d7480;
  position: relative;
}
.editing .group-label { padding-right: 0; }
.launcher {
  position: absolute;
  right: 7px;
  top: 7px;
  width: 9px;
  height: 9px;
  border: 1px solid #8a9099;
  border-right: none;
  border-bottom: none;
}
.launcher::after {
  content: "";
  position: absolute;
  right: 0;
  bottom: 0;
  border: 3px solid transparent;
  border-right-color: #777;
  border-bottom-color: #777;
}
.big-button {
  width: 76px;
  display: flex;
  flex-direction: column;
  align-items: center;
  line-height: 22px;
}
.big-button > svg { margin-bottom: 4px; }
.big-button > .caret { margin-top: 6px; }
.big-button.change { padding-top: 4px; }
.big-button.change > svg { margin-bottom: 5px; }
.stack { display: flex; flex-direction: column; }
.small-button { display: flex; align-items: center; gap: 5px; height: 22px; }
.clipboard .stack { gap: 10px; padding-top: 6px; }
.disabled { color: #9a9a9a; }
.editing .stack { padding: 2px 0 0 6px; gap: 8px; }

.rows { flex: 1; display: flex; flex-direction: column; gap: 11px; padding: 13px 0 0 5px; }
.row { display: flex; align-items: center; height: 32px; }
.combo {
  width: 75px;
  height: 32px;
  padding: 0 3px;
  border: 1px solid #c9cdd2;
  border-radius: 0;
  appearance: none;
  color: #000;
  background:
    linear-gradient(45deg, transparent 50%, #666 50%) no-repeat right 9px center / 4px 4px,
    linear-gradient(-45deg, transparent 50%, #666 50%) no-repeat right 5px center / 4px 4px,
    #fff;
}
.combo.wide { width: 111px; margin-right: -1px; }
.tool {
  width: 32px;
  height: 30px;
  display: flex;
  align-items: center;
  justify-content: center;
  flex: none;
  color: #222;
}
.tool.split { width: 44px; justify-content: space-between; padding: 0 4px; }
.tool.on {
  background: linear-gradient(#ffe9a0, #fdd262 45%, #ffeb84);
  border: 1px solid #c2a04a;
  border-radius: 3px;
}
.serif { font-family: "Liberation Serif", serif; font-weight: 700; font-size: 22px; }
.serif.small { font-size: 20px; }
.serif.italic { font-style: italic; }
.serif.strike { font-size: 17px; }
.serif sub, .serif sup { font-size: 11px; color: #2d5fb4; }
.serif sub { align-self: flex-end; }
.serif sup { align-self: flex-start; }
.tri-up, .tri-down { align-self: flex-start; border: 4px solid transparent; }
.tri-up { border-top: 0; border-bottom: 5px solid #2a4f9e; }
.tri-down { border-bottom: 0; border-top: 5px solid #2a4f9e; }
.glow {
  font-size: 26px;
  font-weight: 700;
  line-height: 28px;
  color: #e6f3fc;
  -webkit-text-stroke: 1px #5b9ad2;
  text-shadow: 0 0 4px #6fb4ea, 0 0 4px #6fb4ea;
}
.ink-a {
  width: 24px;
  height: 24px;
  line-height: 18px;
  font-family: "Liberation Serif", serif;
  font-size: 20px;
  font-weight: 700;
  color: #24457f;
  border-bottom: 6px solid #000;
}
.pilcrow { font-size: 26px; color: #000; }
.sep { width: 1px; height: 28px; margin: 0 3px; background: #d4d7db; }

/* style gallery */
.styles .group-body { padding: 5px 4px 0 5px; }
.gallery {
  flex: 1;
  height: 90px;
  display: flex;
  background: #fff;
  border: 1px solid #c3c7cc;
}
.style {
  width: 104px;
  flex: none;
  text-align: left;
  padding: 11px 5px 0 7px;
  display: flex;
  flex-direction: column;
  color: #444;
}
.preview {
  width: 92px;
  height: 33px;
  display: flex;
  align-items: flex-end;
  overflow: hidden;
  color: #000;
  font-size: 18px;
  line-height: 26px;
}
.preview span { line-height: 1; flex: none; }
.huge { font-size: 74px; margin-bottom: -8px; }
.huge.times { margin-bottom: -12px; }
.large { font-size: 60px; margin-bottom: -10px; }
.times { font-family: "Liberation Serif", serif; }
.heavy { font-size: 42px; font-weight: 700; margin-bottom: -4px; }
.style-name { margin-top: 12px; line-height: 24px; font-size: 14px; }
.style-name b { font-weight: 400; color: #4a6c96; }
.gallery-scroll { width: 21px; margin-left: auto; display: flex; flex-direction: column; }
.gallery-scroll button { flex: 1; border: 1px solid #c3c7cc; border-width: 0 0 1px 1px; background: #fafafb; }
.gallery-scroll button:first-child { background: #ececee; }
.gallery-scroll button:last-child { border-bottom: none; }

/* workspace */
.workspace {
  flex: 1;
  min-height: 0;
  display: flex;
  background: linear-gradient(#cdd0d5, #b8bbc0);
}
.navpane {
  width: 306px;
  flex: none;
  margin-top: 2px;
  padding: 1px 7px 3px 2px;
  background: #e8ebf0;
  border: 1px solid #8b9097;
  display: flex;
  flex-direction: column;
  font-size: 14px;
}
.nav-title {
  height: 18px;
  margin-right: -5px;
  padding: 0 5px 0 2px;
  background: #cdd3da;
  font-size: 11px;
  font-weight: 600;
  display: flex;
  align-items: center;
  gap: 13px;
}
.nav-title .caret { margin-left: auto; }
.nav-search {
  height: 33px;
  margin: 6px 0 8px 5px;
  padding: 0 4px 0 3px;
  background: #fff;
  border: 1px solid #cfd3d8;
  display: flex;
  align-items: center;
  gap: 8px;
}
.nav-search input { flex: 1; min-width: 0; border: none; outline: none; font-size: 15px; }
.nav-search input::placeholder { color: #6e6e6e; }
.nav-tabs { display: flex; margin-left: 5px; height: 34px; }
.nav-tabs button {
  width: 34px;
  display: flex;
  align-items: center;
  justify-content: center;
  border: 1px solid #b6bac0;
  border-left: none;
}
.nav-tabs .on { border-left: 1px solid #b6bac0; border-bottom: none; background: #fff; width: 35px; }
.nav-arrows {
  flex: 1;
  display: flex;
  align-items: center;
  justify-content: flex-end;
  gap: 16px;
  padding: 0 8px 2px 0;
  border-bottom: 1px solid #b6bac0;
}
.nav-body {
  flex: 1;
  min-height: 0;
  margin-left: 5px;
  display: flex;
  background: #fff;
  border: 1px solid #b6bac0;
  border-top: none;
}
.nav-list {
  flex: 1;
  display: flex;
  flex-direction: column;
  justify-content: flex-end;
  overflow: hidden;
  padding: 0 6px 0 4px;
}
.nav-list a {
  height: 32px;
  flex: none;
  line-height: 31px;
  padding-left: 26px;
  color: #3b3b3b;
  text-decoration: none;
  white-space: nowrap;
  overflow: hidden;
  border: 1px solid #d3d6da;
  border-radius: 4px;
  background: linear-gradient(#fff 50%, #f4f5f7);
  position: relative;
}
.nav-list .lv2 { margin-left: 72px; }
.nav-list .lv3 { margin-left: 96px; }
.nav-list .lv5 { margin-left: 144px; }
.nav-list .partial { margin-left: 120px; }
.nav-list .current {
  background: linear-gradient(#ffe28a, #fdd363 50%, #ffea80);
  border-color: #c2912e;
}
.nav-list .open::before {
  content: "";
  position: absolute;
  left: 9px;
  top: 10px;
  border: 4px solid transparent;
  border-right-color: #222;
  border-bottom-color: #222;
}
.nav-scroll { width: 24px; display: flex; flex-direction: column; background: #f2f2f3; }
.nav-scroll button {
  height: 26px;
  border: 1px solid #b9bdc3;
  border-radius: 2px;
  background: #f4f5f7;
  display: flex;
  align-items: center;
  justify-content: center;
}
.nav-track { flex: 1; display: grid; grid-template-rows: 118fr 306fr 203fr; }
.nav-thumb {
  grid-row: 2;
  border: 1px solid #a9adb3;
  border-radius: 2px;
  background: linear-gradient(90deg, #f3f3f4, #e2e3e6);
  display: flex;
  align-items: center;
  justify-content: center;
}

/* rulers */
.vruler-col {
  width: 31px;
  flex: none;
  display: flex;
  flex-direction: column;
  background: linear-gradient(#d3d6db, #c6c9cf);
}
.tab-stop {
  width: 32px;
  height: 32px;
  margin-top: 2px;
  border: 1px solid #8b9097;
  background: #f6f6f6;
  outline: 4px solid #cdd0d5;
  outline-offset: -5px;
  display: flex;
  align-items: center;
  justify-content: center;
}
.vruler {
  width: 22px;
  flex: 1;
  margin: 71px 0 31px 5px;
  padding: 16px 0 21px;
  border: 1px solid #80858c;
  background: #cdd0d5;
  display: flex;
}
.vruler-white {
  flex: 1;
  padding-top: 12px;
  display: flex;
  flex-direction: column;
  background: #f6f6f6;
  border: 1px solid #80858c;
  border-width: 1px 0;
}
.mark {
  position: relative;
  display: flex;
  align-items: center;
  justify-content: center;
  color: #555;
}
.vruler .mark { height: 34px; width: 20px; writing-mode: vertical-rl; transform: rotate(180deg); }
.mark::before, .mark::after { content: ""; position: absolute; background: #555; }
.vruler .mark::before { left: 6px; bottom: 0; width: 8px; height: 1px; }
.vruler .mark::after { left: 9px; bottom: 7px; width: 2px; height: 1px; box-shadow: 0 -19px #555; }
.doc-col { flex: 1; min-width: 0; display: flex; flex-direction: column; overflow: hidden; }
.hruler-wrap { width: 860px; height: 34px; margin: 0 auto; padding-top: 7px; position: relative; flex: none; }
.hruler {
  height: 22px;
  padding-left: 15px;
  display: grid;
  grid-template-columns: repeat(25, 4%);
  background: #f6f6f6;
  border: 1px solid #80858c;
  overflow: hidden;
}
.hruler .mark::before { left: 0; top: 6px; width: 1px; height: 8px; }
.hruler .mark::after { left: 7px; top: 9px; width: 1px; height: 2px; box-shadow: 19px 0 #555; }
.tab-ticks { height: 4px; background: repeating-linear-gradient(90deg, transparent 0 42px, #666 42px 43px); }
.indent { position: absolute; }
.indent.left { left: -6px; top: 3px; }
.indent.right { right: -6px; top: 18px; }

/* pages */
.pages {
  width: 888px;
  flex: 1;
  min-height: 0;
  margin: 0 auto;
  padding: 0 14px;
  overflow: hidden;
  display: flex;
  flex-direction: column;
  background: linear-gradient(#a9adb2, #989c9f);
}
.page { background: #fff; position: relative; flex: none; }
.page.prev { height: 59px; overflow: hidden; }
.page.main { height: 645px; }
.page.next { flex: 1; }
.page-gap { height: 13px; flex: none; margin: 0 -14px; background: #8c9094; border-top: 2px solid #a9adb2; }
.doc-title {
  position: absolute;
  left: 228px;
  top: 12px;
  line-height: 54px;
  font-size: 35px;
  color: #001f60;
  white-space: nowrap;
}
.title-line { position: absolute; left: 340px; top: 56px; width: 242px; height: 3px; background: #41719c; }
.text-cursor { position: absolute; left: 0; top: 136px; width: 2px; height: 17px; background: #000; }
.shape {
  position: absolute;
  background: #5b9bd5;
  border: 1px solid #41719c;
  border-radius: 15px;
  color: #fff;
  font-size: 20px;
  font-weight: 700;
  line-height: 28px;
  text-align: center;
  white-space: nowrap;
}
.s-top { left: 329px; top: -40px; width: 214px; height: 76px; }
.s-children { left: 41px; top: 164px; width: 228px; height: 93px; padding-top: 2px; line-height: 29px; }
.s-key { left: 343px; top: 155px; width: 205px; height: 118px; padding-top: 2px; }
.s-media { left: 635px; top: 167px; width: 182px; height: 93px; padding-top: 30px; }
.s-tours { left: 110px; top: 350px; width: 231px; height: 93px; padding-top: 2px; }
.s-env { left: 552px; top: 340px; width: 217px; height: 135px; padding-top: 30px; line-height: 29px; font-size: 19px; }
/* outline shifted away from its fill */
.shape.offset { border-color: #5b9bd5; }
.shape.offset::before {
  content: "";
  position: absolute;
  inset: -1px 3px -1px -7px;
  border: 1px solid #41719c;
  border-radius: 15px;
}
.s-key.offset::before { right: -1px; }

/* document scrollbar */
.vscroll {
  width: 26px;
  flex: none;
  display: flex;
  flex-direction: column;
  align-items: center;
  background: linear-gradient(90deg, #d3d8de, #dfe3ec);
  padding-top: 4px;
}
.split-bar { width: 13px; height: 3px; margin-bottom: 2px; background: #777b82; }
.ruler-toggle {
  width: 26px;
  height: 26px;
  border: 1px solid #8b9097;
  background: #d7dbe1;
  display: flex;
  align-items: center;
  justify-content: center;
}
.arrow-btn { height: 26px; width: 26px; }
.vtrack { flex: 1; width: 100%; display: grid; grid-template-rows: 413fr 25fr 185fr; }
.vthumb {
  grid-row: 2;
  margin-right: 1px;
  border: 1px solid #8b9097;
  border-radius: 2px;
  background: #eceff4;
  display: flex;
  align-items: center;
  justify-content: center;
}
.browse {
  width: 100%;
  height: 79px;
  border-top: 1px solid #aeb3ba;
  display: flex;
  flex-direction: column;
  justify-content: space-evenly;
  align-items: center;
}

/* status bar */
.status {
  height: 33px;
  flex: none;
  display: flex;
  align-items: stretch;
  border-top: 2px solid #9096a0;
  background: linear-gradient(#fff 0 2px, #dde1e6 3px, #b9bec4);
}
.cell {
  padding: 0 10px;
  display: flex;
  align-items: center;
  border-right: 1px solid #8f959c;
  box-shadow: 1px 0 #dfe2e6;
}
.cell:first-child { padding-left: 8px; }
.cell.lang { gap: 17px; padding: 0 12px 0 9px; }
.status-space { flex: 1; }
.views { display: flex; border-left: 1px solid #8f959c; padding-left: 4px; }
.views button { width: 28px; height: 29px; display: flex; align-items: center; justify-content: center; }
.views .on {
  background: linear-gradient(#ffe28a, #fdd363 50%, #ffea80);
  border: 1px solid #c2912e;
  border-radius: 2px;
}
.zoom-value { padding: 0 16px 0 9px; }
.zoom-btn {
  width: 24px;
  height: 24px;
  align-self: center;
  border: 2px solid #80858c;
  border-radius: 50%;
  background: #f4f5f7;
  display: flex;
  align-items: center;
  justify-content: center;
}
.zoom-btn:last-child { margin-right: 4px; }
.zoom-range {
  width: 150px;
  align-self: center;
  height: 20px;
  appearance: none;
  background:
    linear-gradient(#80858c, #80858c) no-repeat center / 1px 8px,
    linear-gradient(#80858c, #80858c) no-repeat center / 100% 1px;
}
.zoom-range::-webkit-slider-thumb {
  appearance: none;
  width: 13px;
  height: 18px;
  border: 2px solid #737980;
  border-radius: 1px 1px 7px 7px;
  background: #f4f5f7;
}

/* taskbar */
.taskbar { height: 60px; flex: none; display: flex; background: #1d1c1c; color: #fff; }
.start { width: 72px; display: flex; align-items: center; justify-content: center; }
.task-search {
  width: 516px;
  display: flex;
  align-items: center;
  background: #f2f2f2;
  border: 2px solid #bdbdbd;
  border-right-width: 0;
  padding-left: 16px;
}
.task-search input {
  flex: 1;
  min-width: 0;
  margin-left: 17px;
  background: none;
  border: none;
  outline: none;
  font-size: 21px;
}
.task-search input::placeholder { color: #1d1d1d; }
.task { width: 75px; display: flex; align-items: center; justify-content: center; }
.task.narrow { width: 73px; }
.task.running {
  background: linear-gradient(#76b9ed, #76b9ed) no-repeat center bottom / 61px 3px;
}
.task.current {
  width: 66px;
  margin-left: 3px;
  background: linear-gradient(#76b9ed, #76b9ed) no-repeat center bottom / 100% 3px, #4b4a4a;
  box-shadow: 1px 0 #1d1c1c, 7px 0 #3a3938;
}
.tray { margin-left: auto; display: flex; align-items: center; gap: 17px; }
.lang-code { font-size: 17px; }
.clock { font-size: 17px; line-height: 28px; text-align: center; margin: 0 10px 0 4px; }
.show-desktop { width: 1px; height: 60px; margin: 0 6px 0 14px; background: #777; }
```
